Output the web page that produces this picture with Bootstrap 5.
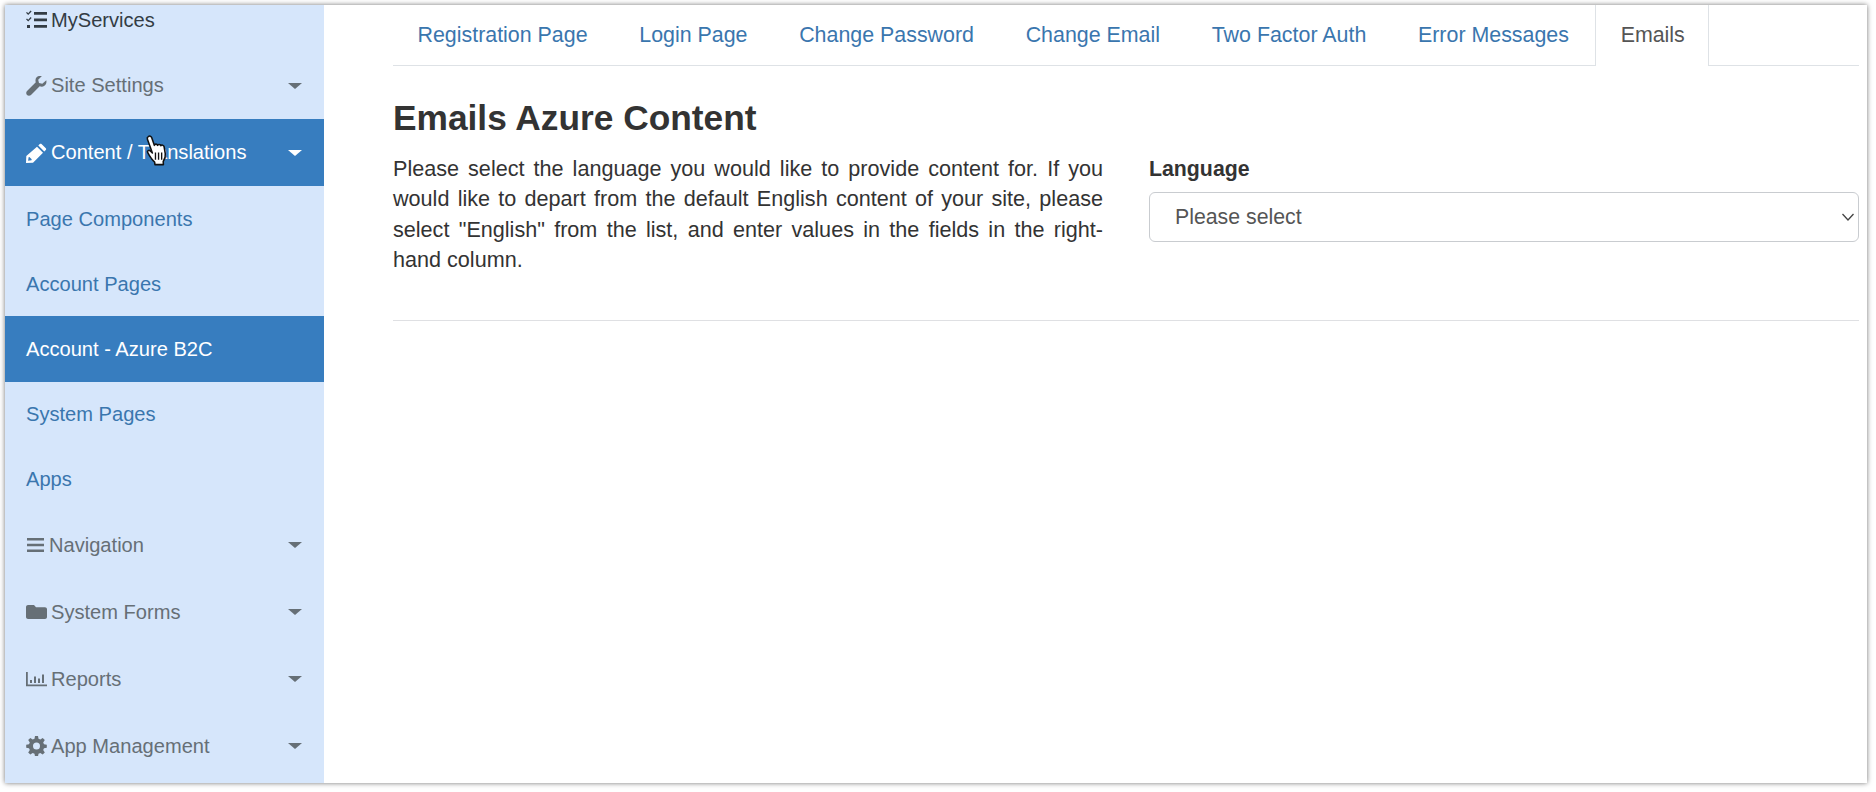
<!DOCTYPE html>
<html lang="en">
<head>
<meta charset="utf-8">
<title>Emails Azure Content</title>
<link href="https://cdn.jsdelivr.net/npm/bootstrap@5.3.0/dist/css/bootstrap.min.css" rel="stylesheet">
<style>
html,body{height:100%;}
body{background:#fff;font-family:"Liberation Sans",Arial,sans-serif;color:#333;overflow:hidden;padding:5px 9px 9px 5px;}
.app-frame{height:778px;box-shadow:0 0 5px rgba(0,0,0,.55);background:#fff;overflow:hidden;}
.side-col{width:319px;flex:none;background:#d6e6fb;position:relative;}
.side-link{display:flex;align-items:center;padding:0 22px 0 21px;font-size:20.1px;color:#666f76;text-decoration:none;height:67px;}
.side-link.sub{height:65.2px;padding-left:21px;color:#3a76ae;}
.side-link.head{height:47px;color:#333c44;padding-bottom:17px;}
.side-link.on{background:#377dbf;color:#fff;}
.side-ico{width:21px;height:20px;margin-right:4px;flex:none;fill:currentColor;}
.side-ico.narrow{width:19px;margin-right:4px;}
.side-caret{margin-left:auto;width:0;height:0;border-left:7px solid transparent;border-right:7px solid transparent;border-top:6px solid currentColor;}
.hand-cursor{position:absolute;left:139px;top:129px;width:25px;height:33px;}
.main-col{flex:1;min-width:0;padding:0 8px 0 69px;}
.tab-strip{height:61px;border-bottom:1px solid #dee2e6;flex-wrap:nowrap;}
.tab-strip .nav-link{font-size:21.4px;line-height:24px;height:61px;padding:18px 24.85px 0;color:#3a76ae;border-radius:0;border-width:0 1px;border-color:transparent;margin:0;}
.tab-strip .nav-item:first-child .nav-link{padding-left:23.500px;}
.tab-strip .nav-link.active{color:#555;border-color:#dee2e6;background:#fff;height:61px;padding-right:23px;}
.page-title{font-size:35.3px;font-weight:700;line-height:44px;margin:30px 0 13.500px;color:#333;}
.cols{--bs-gutter-x:46px;}
.intro{font-size:21.6px;line-height:30.500px;text-align:justify;margin:0;color:#333;}
.lang-label{font-size:21.3px;font-weight:700;line-height:30px;margin-bottom:8.500px;color:#333;display:block;}
.lang-select{height:50px;font-size:21.3px;padding:2px 36px 0 25px;color:#555;border-color:#c9ccd0;border-radius:6px;background-position:right 3px center;background-size:14px 12px;background-image:url("data:image/svg+xml,%3csvg xmlns='http://www.w3.org/2000/svg' viewBox='0 0 14 12'%3e%3cpath fill='none' stroke='%23444' stroke-width='1.300' d='M1.500 3l5.500 6 5.500-6'/%3e%3c/svg%3e");}
.rule{margin:44.500px 0 0;border-top:1px solid #c9ccd0;opacity:.6;}
</style>
</head>
<body>
<div class="app-frame d-flex">
  <aside class="side-col d-flex flex-column">
    <a class="side-link head" href="#"><svg class="side-ico" viewBox="0 0 21 20"><path d="M1 2l1.2 1.2L4.600 .6l1 1L2.200 5 0 2.800zM8 2h13v2.800H8zM1 8.500l1.200 1.200 2.400-2.600 1 1-3.400 3.400L0 9.300zM8 8.500h13v2.800H8zM1 15h3v3H1zM8 15h13v2.800H8z"/></svg>MyServices</a>
    <a class="side-link" href="#"><svg class="side-ico" viewBox="0 0 21 20"><path d="M20.300 4.300c.5 2.300-.2 4.300-1.900 5.500-1.400 1-3.100 1.100-4.700.5L5 19c-1.100 1.100-3 1.100-4 0s-1.100-2.900 0-4l8.800-8.700C9.200 4.600 9.400 3 10.400 1.600 11.700 0 13.700-.5 15.900.1l-3.700 3.600.8 3.200 3.300.9z"/></svg>Site Settings<span class="side-caret"></span></a>
    <a class="side-link on" href="#"><svg class="side-ico" viewBox="0 0 21 20"><path d="M15.500 1l4.300 4.300c.5.500.5 1.200 0 1.700l-1.500 1.500L12.300 2.500 13.800 1c.5-.5 1.200-.5 1.700 0zM11 3.800l6 6L7 19.800 0 20l.3-6.900zM2.600 14.200l-.5 3.600 3.400-.6.2-.9-2.300-2.300z"/></svg>Content / Translations<span class="side-caret"></span></a>
    <a class="side-link sub" href="#">Page Components</a>
    <a class="side-link sub" href="#">Account Pages</a>
    <a class="side-link sub on" href="#">Account - Azure B2C</a>
    <a class="side-link sub" href="#">System Pages</a>
    <a class="side-link sub" href="#">Apps</a>
    <a class="side-link" href="#"><svg class="side-ico narrow" viewBox="0 0 19 20"><path d="M1 3h17v2.500H1zM1 8.700h17v2.500H1zM1 14.500h17V17H1z"/></svg>Navigation<span class="side-caret"></span></a>
    <a class="side-link" href="#"><svg class="side-ico" viewBox="0 0 21 20"><path d="M2 3h6l2 2.300h9c1 0 2 .8 2 1.900V15c0 1.100-1 2-2 2H2c-1 0-2-.9-2-2V5c0-1.100 1-2 2-2z"/></svg>System Forms<span class="side-caret"></span></a>
    <a class="side-link" href="#"><svg class="side-ico" viewBox="0 0 21 20"><path d="M0 3h1.800v12.500H21V17.300H0zM4 11h2v3H4zM8 7.500h2V14H8zM12 9.500h2V14h-2zM16 5.500h2V14h-2z"/></svg>Reports<span class="side-caret"></span></a>
    <a class="side-link" href="#"><svg class="side-ico" viewBox="0 0 21 20"><path fill-rule="evenodd" d="M9 0h3l.5 2.800 1.800.8L16.700 2l2.100 2.100-1.600 2.400.8 1.800 2.800.5v3l-2.800.5-.8 1.800 1.600 2.400-2.100 2.100-2.400-1.600-1.800.8-.5 2.700H9l-.5-2.700-1.800-.8-2.400 1.600-2.100-2.100 1.600-2.400-.8-1.800L.2 11.700v-3L3 8.200l.8-1.800L2.200 4 4.300 1.900l2.400 1.600 1.800-.8zM10.500 6.600a3.500 3.500 0 1 0 0 7 3.500 3.500 0 0 0 0-7z"/></svg>App Management<span class="side-caret"></span></a>
    <svg class="hand-cursor" viewBox="0 0 24 32"><path fill="#fff" stroke="#111" stroke-width="1.500" stroke-linejoin="round" d="M4 2.500c1.400-1 2.800-.4 3.300 1l2.600 7.500c.3-1.600 2.700-1.600 3.200 0 .5-1.300 2.700-1.200 3.200.3.700-1 2.700-.6 3 .8l1.200 7c.5 3-.6 5.600-2 7.600l.2 3H10.500l-.3-2.500c-2-1.600-5.300-6.400-6.800-9.300-.7-1.400 1.200-2.800 2.600-1.500l2 2L3.200 5c-.4-1-.1-2 .8-2.500z"/><path stroke="#111" stroke-width="1.300" d="M11 18v7M14 18v7M17 18v7"/></svg>
  </aside>
  <main class="main-col">
    <ul class="nav nav-tabs tab-strip">
      <li class="nav-item"><a class="nav-link" href="#">Registration Page</a></li>
      <li class="nav-item"><a class="nav-link" href="#">Login Page</a></li>
      <li class="nav-item"><a class="nav-link" href="#">Change Password</a></li>
      <li class="nav-item"><a class="nav-link" href="#">Change Email</a></li>
      <li class="nav-item"><a class="nav-link" href="#">Two Factor Auth</a></li>
      <li class="nav-item"><a class="nav-link" href="#">Error Messages</a></li>
      <li class="nav-item"><a class="nav-link active" href="#">Emails</a></li>
    </ul>
    <h1 class="page-title">Emails Azure Content</h1>
    <div class="row cols">
      <div class="col-6">
        <p class="intro">Please select the language you would like to provide content for. If you would like to depart from the default English content of your site, please select "English" from the list, and enter values in the fields in the right-hand column.</p>
      </div>
      <div class="col-6">
        <label class="lang-label" for="lang">Language</label>
        <select class="form-select lang-select" id="lang"><option>Please select</option></select>
      </div>
    </div>
    <hr class="rule">
  </main>
</div>
<script src="https://cdn.jsdelivr.net/npm/bootstrap@5.3.0/dist/js/bootstrap.bundle.min.js"></script>
</body>
</html>
